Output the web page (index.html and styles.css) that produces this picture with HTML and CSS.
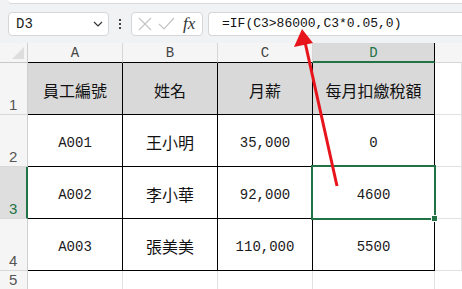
FILE: index.html
```html
<html>
<head>
    <meta charset="UTF-8">
    <title>D3</title>
    <link rel="stylesheet" href="styles.css">
</head>
<body>
    <div class="franja"></div>

    <div class="barra">
        <div class="cuadroNombre">
            <span>D3</span>
            <svg class="flecha" width="10" height="6" viewBox="0 0 10 6"><path d="M1 1 L5 5 L9 1" fill="none" stroke="#333" stroke-width="1.2"/></svg>
        </div>
        <div class="puntos"><i></i><i></i><i></i></div>
        <div class="cuadroFx">
            <svg width="14" height="14" viewBox="0 0 14 14"><path d="M1 1 L13 13 M13 1 L1 13" stroke="#c4c4c4" stroke-width="1.2"/></svg>
            <svg width="17" height="14" viewBox="0 0 17 14"><path d="M1 7 L6 12 L16 1" fill="none" stroke="#c4c4c4" stroke-width="1.2"/></svg>
            <span class="fx">fx</span>
        </div>
        <div class="formula">=IF(C3&gt;86000,C3*0.05,0)</div>
    </div>

    <div class="hoja">
        <div class="esquina"></div>
        <div class="colCab">A</div>
        <div class="colCab">B</div>
        <div class="colCab">C</div>
        <div class="colCab sel">D</div>
        <div class="colCab ultima"></div>

        <div class="filaCab">1</div>
        <div class="celda titulo">員工編號</div>
        <div class="celda titulo">姓名</div>
        <div class="celda titulo">月薪</div>
        <div class="celda titulo">每月扣繳稅額</div>
        <div class="vacia"></div>

        <div class="filaCab">2</div>
        <div class="celda num">A001</div>
        <div class="celda">王小明</div>
        <div class="celda num">35,000</div>
        <div class="celda num">0</div>
        <div class="vacia"></div>

        <div class="filaCab sel">3</div>
        <div class="celda num">A002</div>
        <div class="celda">李小華</div>
        <div class="celda num">92,000</div>
        <div class="celda num activa">4600</div>
        <div class="vacia"></div>

        <div class="filaCab">4</div>
        <div class="celda num">A003</div>
        <div class="celda">張美美</div>
        <div class="celda num">110,000</div>
        <div class="celda num">5500</div>
        <div class="vacia"></div>

        <div class="filaCab">5</div>
        <div class="vacia"></div>
        <div class="vacia"></div>
        <div class="vacia"></div>
        <div class="vacia"></div>
        <div class="vacia"></div>
    </div>

    <svg class="marca" width="462" height="289" viewBox="0 0 462 289">
        <line x1="337" y1="186" x2="305" y2="42" stroke="#e8141b" stroke-width="3"/>
        <polygon points="302,29 294,47 313,43" fill="#e8141b"/>
    </svg>
</body>
</html>
```

FILE: styles.css
```css
body {
    margin: 0;
    width: 462px;
    height: 289px;
    overflow: hidden;
    position: relative;
    background-color: #f1f2f3;
    font-family: "Liberation Mono", "Noto Sans CJK TC", monospace;
}

.franja {
    height: 3px;
    margin-left: 8px;
    background-color: white;
    border-bottom: 1px solid #d9d9d9;
    border-bottom-left-radius: 6px;
}

.barra {
    display: flex;
    align-items: center;
    height: 39px;
    padding-left: 8px;
    box-sizing: border-box;
}

.cuadroNombre, .cuadroFx, .formula {
    height: 24px;
    box-sizing: border-box;
    background-color: white;
    border: 1px solid #d6d6d6;
    border-radius: 4px;
    display: flex;
    align-items: center;
}

.cuadroNombre {
    width: 101px;
    padding: 0 5px 0 7px;
    justify-content: space-between;
    font-size: 14px;
    color: #222;
}

.puntos {
    width: 22px;
    display: flex;
    flex-direction: column;
    align-items: center;
    gap: 2px;
}

.puntos i {
    width: 2px;
    height: 2px;
    background-color: #444;
}

.cuadroFx {
    width: 72px;
    padding: 0 4px 0 6px;
    gap: 6px;
}

.fx {
    font-family: "Liberation Serif", serif;
    font-style: italic;
    font-size: 17px;
    color: #333;
    margin-left: 2px;
}

.formula {
    flex: 1;
    margin-left: 5px;
    border-right: none;
    border-radius: 4px 0 0 4px;
    padding-left: 13px;
    font-size: 13px;
    color: #111;
}

.hoja {
    display: grid;
    grid-template-columns: 28px 95px 95px 95px 122px 1fr;
    grid-template-rows: 20px 52px 52px 52px 52px 1fr;
    height: 246px;
}

.hoja > div {
    box-sizing: border-box;
}

.esquina {
    position: relative;
    background-color: #f5f5f5;
    border-right: 1px solid #d0d0d0;
    border-bottom: 1px solid #c8c8c8;
}

.esquina::after {
    content: "";
    position: absolute;
    right: 3px;
    bottom: 3px;
    border-left: 12px solid transparent;
    border-bottom: 12px solid #dedede;
}

.colCab {
    background-color: #f5f5f5;
    border-right: 1px solid #d6d6d6;
    border-bottom: 1px solid #000;
    text-align: center;
    font-size: 14px;
    line-height: 20px;
    color: #444;
}

.colCab.sel {
    background-color: #dadada;
    color: #217346;
    border-bottom: 2px solid #217346;
    border-right: 1px solid #000;
}

.colCab.ultima {
    border-bottom: 1px solid #d6d6d6;
    border-right: none;
}

.filaCab {
    background-color: #f5f5f5;
    border-right: 1px solid #d0d0d0;
    border-bottom: 1px solid #d8d8d8;
    display: flex;
    align-items: flex-end;
    padding: 0 0 1px 9px;
    font-family: "Liberation Sans", sans-serif;
    font-size: 15px;
    color: #555;
}

.filaCab.sel {
    background-color: #dedede;
    color: #217346;
    border-right: 2px solid #217346;
}

.celda {
    background-color: white;
    border-right: 1px solid #000;
    border-bottom: 1px solid #000;
    display: flex;
    align-items: center;
    justify-content: center;
    padding-top: 3px;
    font-size: 16px;
    color: #111;
}

.celda.num {
    font-size: 14px;
    padding-top: 4px;
    color: #1a1a1a;
}

.titulo {
    background-color: #d9d9d9;
}

.activa {
    position: relative;
}

.activa::before {
    content: "";
    position: absolute;
    left: -2px;
    top: -2px;
    right: -2px;
    bottom: -2px;
    border: 2px solid #217346;
}

.activa::after {
    content: "";
    position: absolute;
    right: -4px;
    bottom: -4px;
    width: 5px;
    height: 5px;
    background-color: #217346;
    border: 1px solid white;
}

.vacia {
    background-color: white;
    border-right: 1px solid #e1e1e1;
    border-bottom: 1px solid #e1e1e1;
}

.hoja > .vacia:last-child {
    border-right: none;
}

.marca {
    position: absolute;
    left: 0;
    top: 0;
    pointer-events: none;
}
```
